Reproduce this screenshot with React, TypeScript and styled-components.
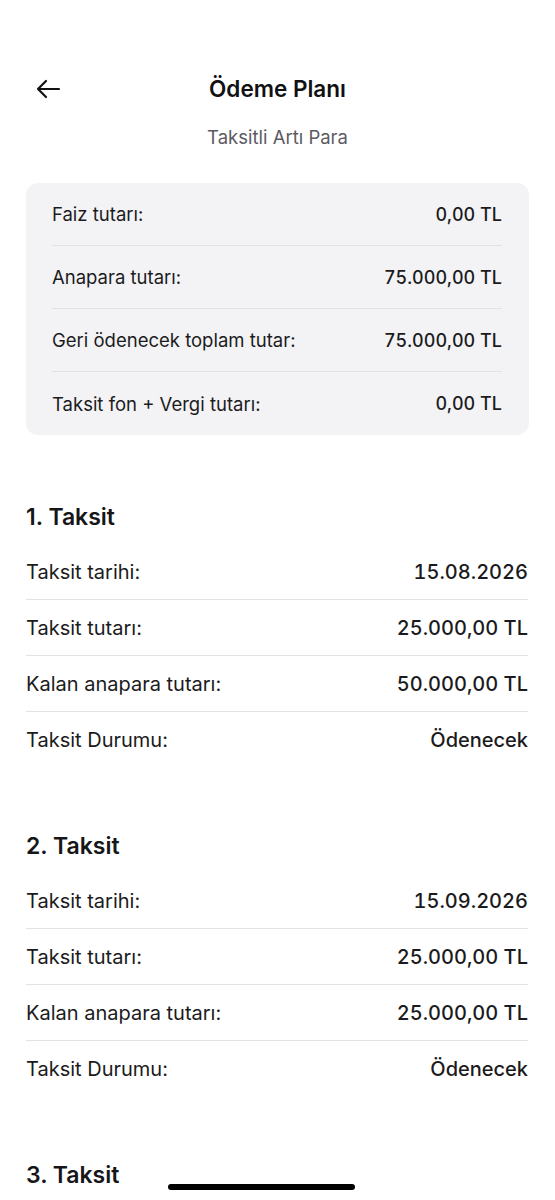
import styled, { createGlobalStyle } from 'styled-components';

const GlobalStyle = createGlobalStyle`
    *, *::before, *::after {
        box-sizing: border-box;
    }
    html, body {
        margin: 0;
        padding: 0;
        background: #ffffff;
    }
    body {
        font-family: Inter, "Noto Sans", sans-serif;
        color: #1b1b1d;
        -webkit-font-smoothing: antialiased;
    }
`;

const Screen = styled.div`
    width: 555px;
    height: 1200px;
    overflow: hidden;
    position: relative;
    background: #ffffff;
`;

const Header = styled.div`
    display: grid;
    grid-template-columns: 60px 1fr 60px;
    align-items: center;
    height: 111px;
    padding: 67px 26px 0;
`;

const BackButton = styled.button`
    border: 0;
    background: none;
    width: 44px;
    height: 44px;
    display: flex;
    align-items: center;
    justify-content: flex-start;
    padding: 0 0 0 9px;
    cursor: pointer;
`;

const Title = styled.h1`
    margin: 0;
    text-align: center;
    font-size: 22.5px;
    line-height: 44px;
    font-weight: 600;
    color: #111113;
`;

const Subtitle = styled.p`
    margin: 15px 0 0;
    text-align: center;
    font-size: 18.5px;
    line-height: 22px;
    color: #5d5a63;
`;

const Summary = styled.div`
    margin: 35px 26px 0;
    background: #f3f3f5;
    border-radius: 12px;
    padding: 0 27px 0 26px;
`;

const SummaryRow = styled.div`
    display: flex;
    justify-content: space-between;
    align-items: center;
    height: 63px;
    font-size: 18.5px;
    border-bottom: 1px solid #e2e2e6;

    &:last-child {
        border-bottom: 0;
    }
`;

const SummaryValue = styled.span`
    font-weight: 500;
    font-size: 18px;
    font-variant-numeric: tabular-nums;
`;

const Installment = styled.section<{ $first?: boolean }>`
    padding: 0 27px 0 26px;
    margin-top: ${(p) => (p.$first ? '68px' : '64px')};
`;

const InstallmentTitle = styled.h2`
    margin: 0 0 13px;
    font-size: 23px;
    line-height: 28px;
    font-weight: 600;
    color: #161618;
`;

const DetailRow = styled.div`
    display: flex;
    justify-content: space-between;
    align-items: center;
    height: 56px;
    font-size: 20px;
    border-bottom: 1px solid #e2e2e6;

    &:last-child {
        border-bottom: 0;
    }
`;

const DetailValue = styled.span`
    font-weight: 500;
    font-variant-numeric: tabular-nums;
`;

const HomeIndicator = styled.div`
    position: absolute;
    left: 168px;
    bottom: 10px;
    width: 187px;
    height: 6px;
    border-radius: 3px;
    background: #000000;
`;

type Taksit = {
    date?: string;
    amount?: string;
    remaining?: string;
    status?: string;
};

const summary = [
    { label: 'Faiz tutarı:', value: '0,00 TL' },
    { label: 'Anapara tutarı:', value: '75.000,00 TL' },
    { label: 'Geri ödenecek toplam tutar:', value: '75.000,00 TL' },
    { label: 'Taksit fon + Vergi tutarı:', value: '0,00 TL' },
];

// third one is below the fold, only its title shows
const installments: Taksit[] = [
    { date: '15.08.2026', amount: '25.000,00 TL', remaining: '50.000,00 TL', status: 'Ödenecek' },
    { date: '15.09.2026', amount: '25.000,00 TL', remaining: '25.000,00 TL', status: 'Ödenecek' },
    {},
];

const App = () => {
    return (
        <Screen>
            <GlobalStyle />
            <Header>
                <BackButton aria-label="Geri">
                    <svg width="26" height="20" viewBox="0 0 26 20" fill="none">
                        <path d="M24 10H3M11 2L3 10L11 18" stroke="#111" strokeWidth="2.2" strokeLinecap="round" strokeLinejoin="round" />
                    </svg>
                </BackButton>
                <Title>Ödeme Planı</Title>
                <div />
            </Header>
            <Subtitle>Taksitli Artı Para</Subtitle>
            <Summary>
                {summary.map((item) => (
                    <SummaryRow key={item.label}>
                        <span>{item.label}</span>
                        <SummaryValue>{item.value}</SummaryValue>
                    </SummaryRow>
                ))}
            </Summary>
            {installments.map((item, index) => (
                <Installment key={index} $first={index === 0}>
                    <InstallmentTitle>{index + 1}. Taksit</InstallmentTitle>
                    {item.date && (
                        <>
                            <DetailRow>
                                <span>Taksit tarihi:</span>
                                <DetailValue>{item.date}</DetailValue>
                            </DetailRow>
                            <DetailRow>
                                <span>Taksit tutarı:</span>
                                <DetailValue>{item.amount}</DetailValue>
                            </DetailRow>
                            <DetailRow>
                                <span>Kalan anapara tutarı:</span>
                                <DetailValue>{item.remaining}</DetailValue>
                            </DetailRow>
                            <DetailRow>
                                <span>Taksit Durumu:</span>
                                <DetailValue>{item.status}</DetailValue>
                            </DetailRow>
                        </>
                    )}
                </Installment>
            ))}
            <HomeIndicator />
        </Screen>
    );
};

export default App;
